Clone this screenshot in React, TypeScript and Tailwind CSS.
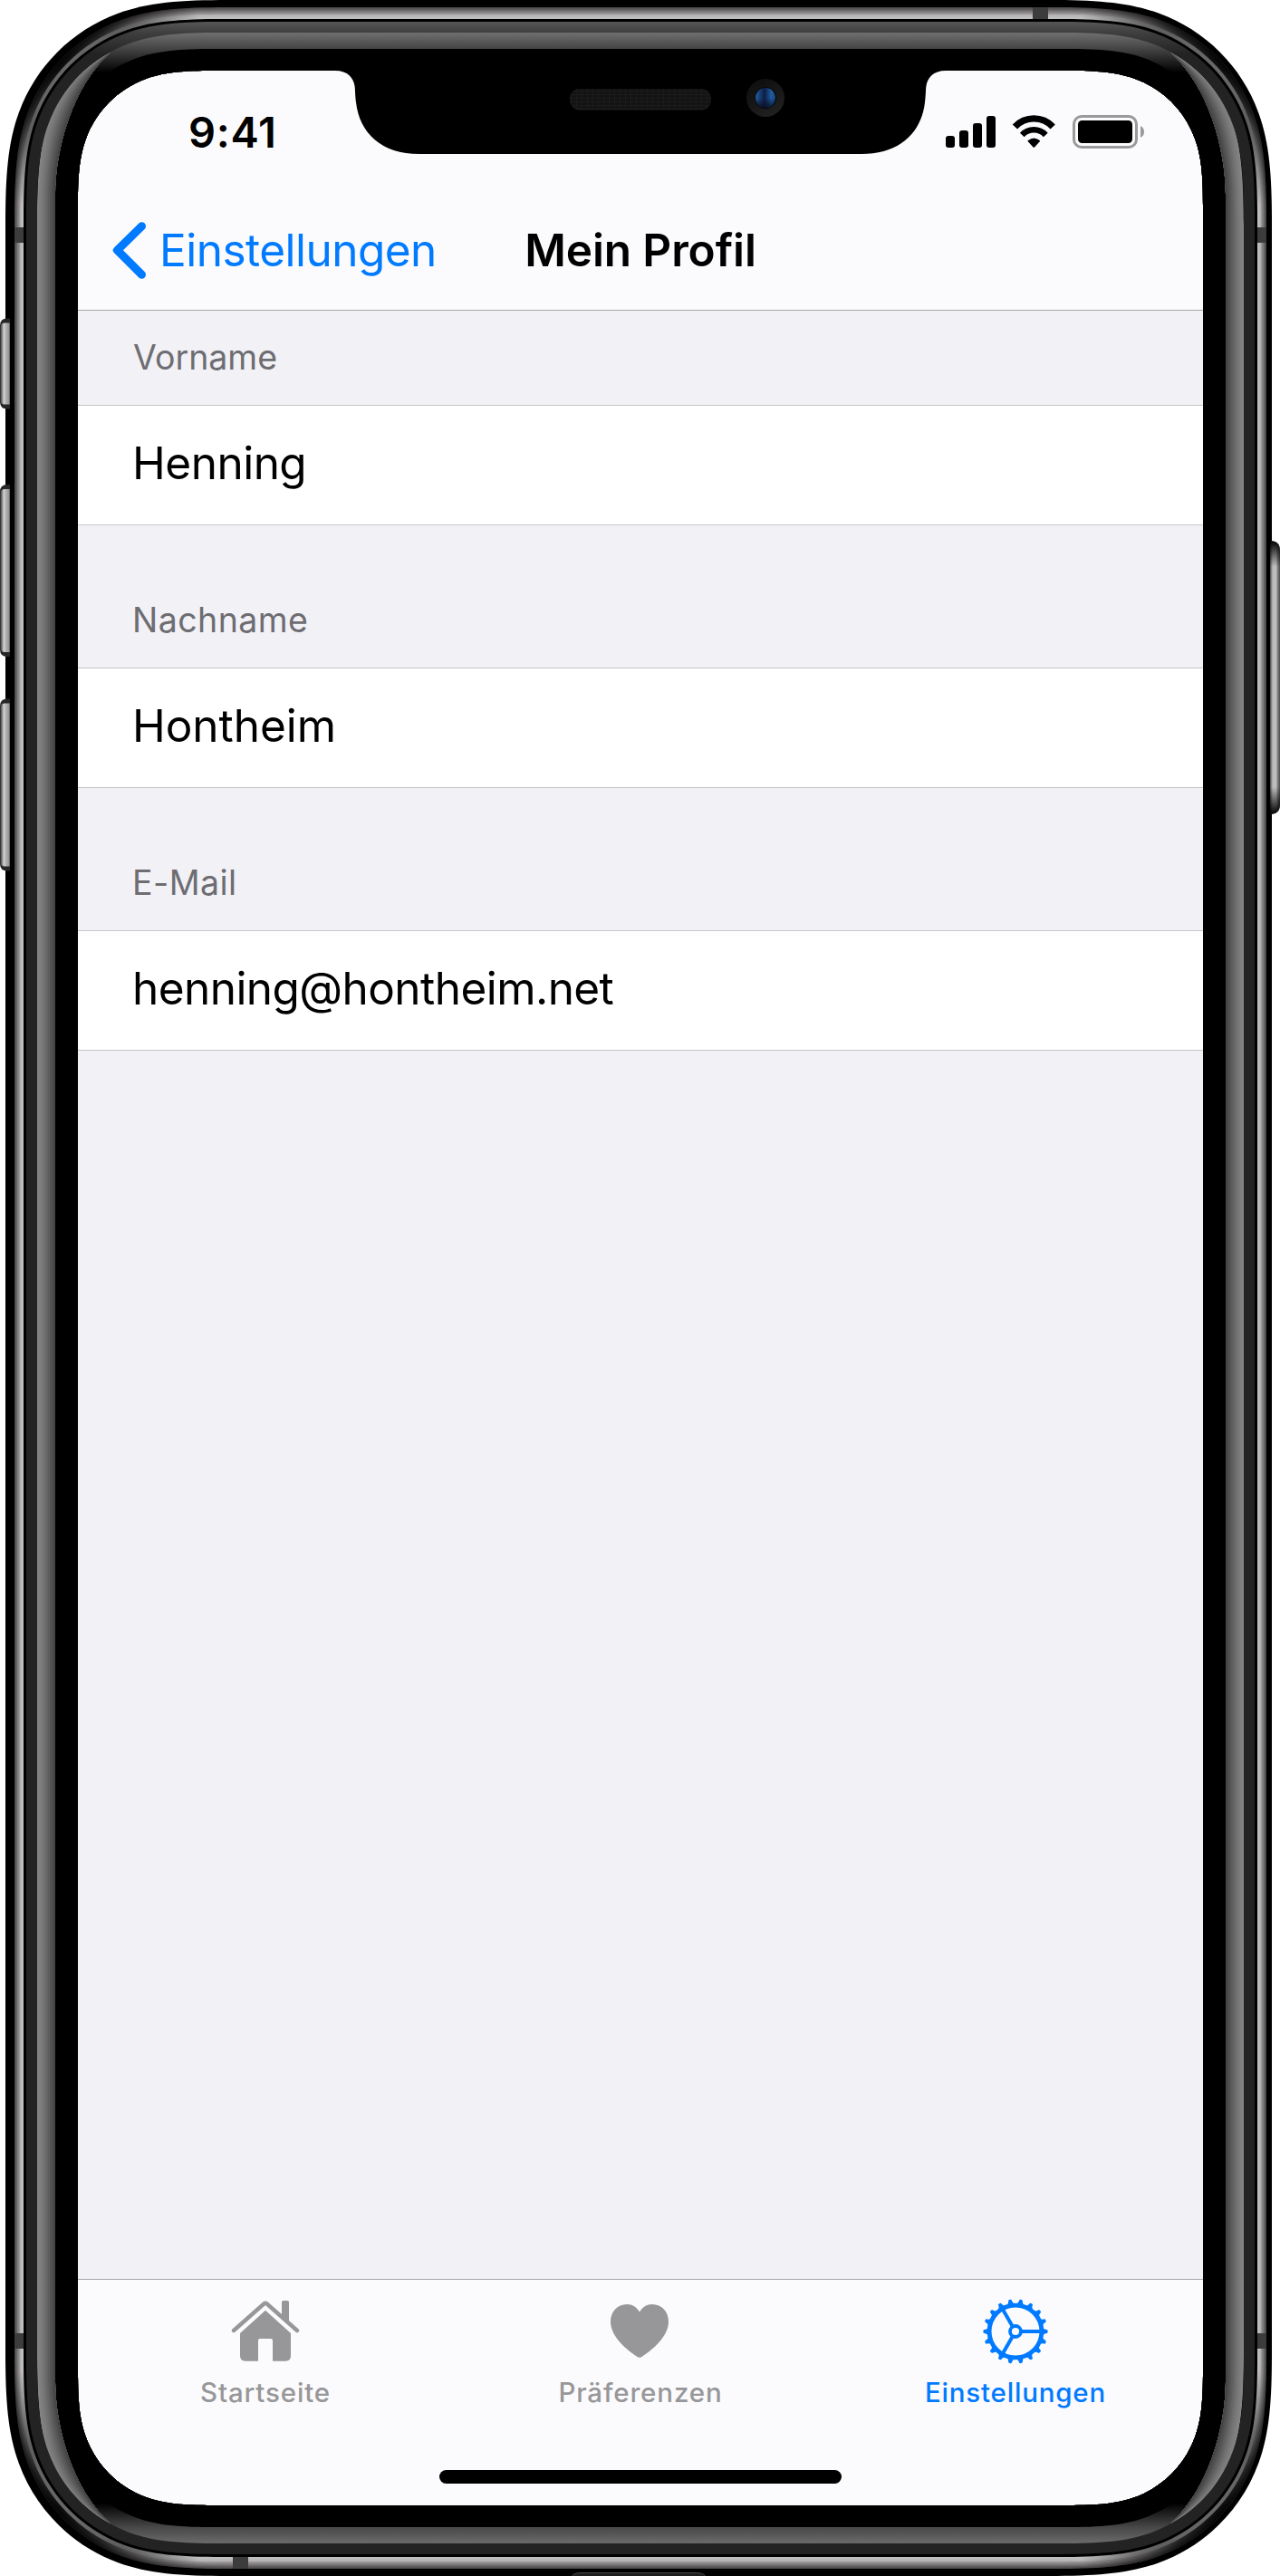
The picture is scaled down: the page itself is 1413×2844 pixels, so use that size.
import React from 'react';

const WIDTH = 1413;
const HEIGHT = 2844;

type Box = [number, number, number, number];
type Point = [number, number];

/** Closed outline of a box with continuous (superelliptic) corners. */
function squircle([x0, y0, x1, y1]: Box, r: number): string {
  const a = 1.25 * r;
  const b = 0.98 * r;
  const c = 0.8 * r;
  const h = 0.0136 * r;
  const d = 0.63149 * r;
  const e = 0.07491 * r;
  const f = 0.37282 * r;
  const g = 0.16906 * r;
  return [
    `M${x0 + a} ${y0}H${x1 - a}`,
    `C${x1 - b} ${y0} ${x1 - c} ${y0 + h} ${x1 - d} ${y0 + e}`,
    `C${x1 - f} ${y0 + g} ${x1 - g} ${y0 + f} ${x1 - e} ${y0 + d}`,
    `C${x1 - h} ${y0 + c} ${x1} ${y0 + b} ${x1} ${y0 + a}`,
    `V${y1 - a}`,
    `C${x1} ${y1 - b} ${x1 - h} ${y1 - c} ${x1 - e} ${y1 - d}`,
    `C${x1 - g} ${y1 - f} ${x1 - f} ${y1 - g} ${x1 - d} ${y1 - e}`,
    `C${x1 - c} ${y1 - h} ${x1 - b} ${y1} ${x1 - a} ${y1}`,
    `H${x0 + a}`,
    `C${x0 + b} ${y1} ${x0 + c} ${y1 - h} ${x0 + d} ${y1 - e}`,
    `C${x0 + f} ${y1 - g} ${x0 + g} ${y1 - f} ${x0 + e} ${y1 - d}`,
    `C${x0 + h} ${y1 - c} ${x0} ${y1 - b} ${x0} ${y1 - a}`,
    `V${y0 + a}`,
    `C${x0} ${y0 + b} ${x0 + h} ${y0 + c} ${x0 + e} ${y0 + d}`,
    `C${x0 + g} ${y0 + f} ${x0 + f} ${y0 + g} ${x0 + d} ${y0 + e}`,
    `C${x0 + c} ${y0 + h} ${x0 + b} ${y0} ${x0 + a} ${y0}Z`,
  ].join('');
}

const lerp = (a: number, b: number, t: number) => a + (b - a) * t;

const STEEL_OUTER: Box = [16, 8, 1398, 2836];
const STEEL_INNER: Box = [26, 21, 1388, 2823];
const STEEL_TONES = ['#4c494a', '#5a5758', '#6a6768', '#7b7879', '#8a8788', '#989596', '#b2b0b1', '#b9b7b8', '#c0bfc0', '#c0bfc0'];
const CORNERS: Point[] = [[62, 66], [1352, 66], [62, 2778], [1352, 2778]];

const GLOW_OUTER: Point[] = [[41, 250], [41, 155], [48, 96], [122, 58]];
const GLOW_INNER: Point[] = [[61, 215], [61, 165], [80, 95], [122, 58]];
const GLOW_TONES = ['#838383', '#7f7f7f', '#7a7a7a', '#747474', '#6d6d6d', '#656565', '#5d5d5d', '#555555', '#4d4d4d', '#454545'];

function glowPath(t: number): string {
  const edge = GLOW_OUTER.map((p, i): Point => [lerp(p[0], GLOW_INNER[i][0], t), lerp(p[1], GLOW_INNER[i][1], t)]);
  const [o0, o1, o2, o3] = edge;
  const [i0, i1, i2] = GLOW_INNER;
  const m = (p: Point) => `${p[0]} ${HEIGHT - p[1]}`;
  const s = (p: Point) => `${p[0]} ${p[1]}`;
  return `M${s(o0)}C${s(o1)} ${s(o2)} ${s(o3)}C${s(i2)} ${s(i1)} ${s(i0)}L${m(i0)}C${m(i1)} ${m(i2)} ${m(o3)}C${m(o2)} ${m(o1)} ${m(o0)}Z`;
}

function SideGlow() {
  return (
    <g>
      {GLOW_TONES.map((tone, i) => (
        <path key={i} d={glowPath(i / GLOW_TONES.length)} fill={tone} />
      ))}
    </g>
  );
}

function LeftButton({ y, height }: { y: number; height: number }) {
  const outline = (x: number, top: number, bottom: number, r: number) =>
    `M11 ${top}H${x + r}Q${x} ${top} ${x} ${top + r}V${bottom - r}Q${x} ${bottom} ${x + r} ${bottom}H11Z`;
  return (
    <g>
      <path d={outline(0, y, y + height, 8)} fill="#262626" />
      <path d={outline(0.5, y + 5, y + height - 5, 5)} fill="url(#keyLeft)" />
    </g>
  );
}

function DeviceFrame() {
  return (
    <svg className="pointer-events-none absolute inset-0" width={WIDTH} height={HEIGHT} viewBox={`0 0 ${WIDTH} ${HEIGHT}`} aria-hidden="true">
      <defs>
        <clipPath id="bezel">
          <path clipRule="evenodd" d={`M0 0H${WIDTH}V${HEIGHT}H0Z${squircle([86, 78, 1328, 2766], 119)}`} />
        </clipPath>
        <clipPath id="steel">
          <path d={squircle(STEEL_OUTER, 187)} />
        </clipPath>
        <clipPath id="steelEdge">
          <path d={squircle([22.5, 16.5, 1391.5, 2827.5], 180)} />
        </clipPath>
        <clipPath id="glass">
          <path d={squircle([41, 36, 1373, 2808], 161)} />
        </clipPath>
        <radialGradient id="cornerShade">
          <stop offset="0" stopColor="#000" stopOpacity="0.95" />
          <stop offset="0.35" stopColor="#000" stopOpacity="0.75" />
          <stop offset="1" stopColor="#000" stopOpacity="0" />
        </radialGradient>
        <radialGradient id="cornerShine">
          <stop offset="0" stopColor="#8a8a8a" stopOpacity="0.75" />
          <stop offset="0.5" stopColor="#8a8a8a" stopOpacity="0.6" />
          <stop offset="1" stopColor="#8a8a8a" stopOpacity="0" />
        </radialGradient>
        <linearGradient id="rim" gradientUnits="userSpaceOnUse" x1="0" y1="24" x2="0" y2="60">
          <stop offset="0" stopColor="#575757" />
          <stop offset="0.33" stopColor="#3f3f3f" />
          <stop offset="1" stopColor="#232323" />
        </linearGradient>
        <linearGradient id="glow" gradientUnits="userSpaceOnUse" x1="0" y1="36" x2="0" y2="2808">
          <stop offset="0" stopColor="#6f6f6f" />
          <stop offset="0.0065" stopColor="#444" />
          <stop offset="0.016" stopColor="#000" />
          <stop offset="0.984" stopColor="#000" />
          <stop offset="0.9935" stopColor="#474747" />
          <stop offset="1" stopColor="#6b6b6b" />
        </linearGradient>
        <linearGradient id="keyLeft">
          <stop offset="0" stopColor="#444" />
          <stop offset="0.2" stopColor="#8c8c8c" />
          <stop offset="0.35" stopColor="#d4d4d4" />
          <stop offset="0.55" stopColor="#b4b4b4" />
          <stop offset="0.85" stopColor="#9a9a9a" />
          <stop offset="1" stopColor="#555" />
        </linearGradient>
        <linearGradient id="keyRight">
          <stop offset="0" stopColor="#444" />
          <stop offset="0.15" stopColor="#8a8a8a" />
          <stop offset="0.28" stopColor="#bdbdbd" />
          <stop offset="0.62" stopColor="#bdbdbd" />
          <stop offset="0.75" stopColor="#858585" />
          <stop offset="1" stopColor="#4a4a4a" />
        </linearGradient>
        <linearGradient id="keyEnds" x1="0" y1="0" x2="0" y2="1">
          <stop offset="0" stopColor="#000" />
          <stop offset="0.015" stopColor="#000" stopOpacity="0.85" />
          <stop offset="0.095" stopColor="#000" stopOpacity="0" />
          <stop offset="0.9" stopColor="#000" stopOpacity="0" />
          <stop offset="0.985" stopColor="#000" stopOpacity="0.85" />
          <stop offset="1" stopColor="#000" />
        </linearGradient>
        <linearGradient id="lens">
          <stop offset="0" stopColor="#2660a0" />
          <stop offset="0.45" stopColor="#0d1d44" />
          <stop offset="0.8" stopColor="#1e5ea2" />
          <stop offset="1" stopColor="#18457a" />
        </linearGradient>
        <linearGradient id="lensShade" x1="0" y1="0" x2="0" y2="1">
          <stop offset="0.5" stopColor="#0a1024" stopOpacity="0" />
          <stop offset="1" stopColor="#0a1024" stopOpacity="0.95" />
        </linearGradient>
        <linearGradient id="lensRing" x1="0" y1="0" x2="0.6" y2="1">
          <stop offset="0" stopColor="#0c0c0c" />
          <stop offset="1" stopColor="#202020" />
        </linearGradient>
        <pattern id="mesh" width="6" height="4" patternUnits="userSpaceOnUse">
          <rect width="6" height="4" fill="#131313" />
          <path d="M0 0H6M0 0V4" stroke="#1d1d1d" strokeWidth="1.4" />
        </pattern>
      </defs>

      <g clipPath="url(#bezel)">
        <path d={squircle([6, 0, 1404, 2844], 197)} fill="#000" />

        {STEEL_TONES.map((tone, i) => {
          const t = i / STEEL_TONES.length;
          const box = STEEL_OUTER.map((v, k) => lerp(v, STEEL_INNER[k], t)) as Box;
          return <path key={i} d={squircle(box, lerp(187, 176, t))} fill={tone} />;
        })}
        <g clipPath="url(#steel)">
          {CORNERS.map(([cx, cy]) => (
            <circle key={`${cx}-${cy}`} cx={cx} cy={cy} r="165" fill="url(#cornerShade)" />
          ))}
          <g fill="#3c3c3c">
            <rect x="16" y="251" width="10" height="17" />
            <rect x="1388" y="251" width="10" height="17" />
            <rect x="16" y="2576" width="10" height="17" />
            <rect x="1388" y="2576" width="10" height="17" />
            <rect x="1140" y="8" width="17" height="13" />
            <rect x="257" y="2823" width="17" height="13" />
          </g>
        </g>
        <g clipPath="url(#steelEdge)">
          {CORNERS.map(([cx, cy]) => (
            <circle key={`${cx}-${cy}`} cx={cx} cy={cy} r="110" fill="url(#cornerShine)" />
          ))}
        </g>

        <path d={squircle(STEEL_INNER, 176)} fill="#000" />
        <path d={squircle([29, 24, 1385, 2820], 173)} fill="url(#rim)" />
        <path d={squircle([41, 36, 1373, 2808], 161)} fill="url(#glow)" />
        <path d={squircle([61, 54, 1353, 2790], 141)} fill="#000" />
        <g clipPath="url(#glass)">
          <SideGlow />
          <g transform="translate(1414 0) scale(-1 1)">
            <SideGlow />
          </g>
        </g>
      </g>

      <LeftButton y={351.5} height={100} />
      <LeftButton y={535} height={190} />
      <LeftButton y={771.5} height={190} />
      <path d="M1402 597Q1413 597 1413 608V888Q1413 899 1402 899Z" fill="url(#keyRight)" />
      <path d="M1402 597Q1413 597 1413 608V888Q1413 899 1402 899Z" fill="url(#keyEnds)" />
      <rect x="630.5" y="2840.5" width="149" height="12" rx="10" fill="#1f1f1f" stroke="#484848" />

      <path
        d="M370 77V78C384 78 390.5 86 391.7 96C392.1 100 392 105 393 113C397 147 421 170 463 170H951C993 170 1017 147 1021 113C1022 105 1021.9 100 1022.3 96C1023.5 86 1030 78 1044 78V77Z"
        fill="#000"
      />
      <rect x="629" y="98" width="156" height="23.5" rx="11.5" fill="#1c1c1c" />
      <rect x="629" y="98" width="156" height="21.5" rx="10.7" fill="url(#mesh)" />
      <circle cx="845" cy="108" r="21" fill="url(#lensRing)" />
      <circle cx="845" cy="108" r="12" fill="#06070c" />
      <circle cx="845" cy="108" r="11" fill="url(#lens)" />
      <circle cx="845" cy="108" r="11" fill="url(#lensShade)" />
    </svg>
  );
}

function StatusIcons() {
  return (
    <svg width="222" height="40" viewBox="1043 126 222 40" aria-hidden="true">
      <rect x="1044" y="150" width="10" height="13" rx="3" />
      <rect x="1059" y="144" width="10" height="19" rx="3" />
      <rect x="1074" y="136" width="10" height="27" rx="3" />
      <rect x="1089" y="128" width="10" height="35" rx="3" />
      <g transform="translate(1117 126)">
        <path d="M3.4 14A28.6 28.6 0 0 1 45.2 14" fill="none" stroke="#000" strokeWidth="7.3" />
        <path d="M11.3 22.9A17.8 17.8 0 0 1 37.3 22.9" fill="none" stroke="#000" strokeWidth="6.6" />
        <path d="M23.5 36.4L17.6 30Q17.3 29.4 17.9 28.9Q24.3 23.9 30.7 28.9Q31.3 29.4 31 30L25.1 36.4Q24.3 37 23.5 36.4Z" />
      </g>
      <rect x="1185.5" y="128.5" width="69" height="34" rx="8.5" fill="none" stroke="#9a9a9b" strokeWidth="3" />
      <rect x="1190" y="133" width="60" height="25" rx="4.5" />
      <path d="M1259 139Q1263 141 1263 145.500Q1263 150 1259 152Z" fill="#9a9a9b" />
    </svg>
  );
}

function HomeIcon() {
  return (
    <svg width="80" height="72" viewBox="1 2 80 72" fill="#979799" aria-hidden="true">
      <path d="M6 37L39.600 7.300Q41 6.200 42.400 7.300L76 37" fill="none" stroke="#979799" strokeWidth="4.400" strokeLinecap="round" />
      <path d="M59 20V5.500Q59 4 60.500 4H65.500Q67 4 67 5.500V27Z" />
      <path d="M41 14.700L69 40V65Q69 70.700 63.300 70.700H49V48Q49 46 47 46H35Q33 46 33 48V70.700H18.700Q13 70.700 13 65V40Z" />
    </svg>
  );
}

function HeartIcon() {
  return (
    <svg width="80" height="72" viewBox="-7 -6 80 72" fill="#979799" aria-hidden="true">
      <path d="M32 8.500C29 3.300 24 0 18 0C7.500 0 0 8.500 0 19C0 36 18 50.500 30 58.200Q32 59.400 34 58.200C46 50.500 64 36 64 19C64 8.500 56.500 0 46 0C40 0 35 3.300 32 8.500Z" />
    </svg>
  );
}

function GearIcon() {
  const teeth = Array.from({ length: 18 }, (_, i) => i * 20);
  return (
    <svg width="80" height="72" viewBox="-40 -36 80 72" fill="none" stroke="#007aff" aria-hidden="true">
      <circle r="28.900" strokeWidth="4.800" />
      <circle r="6" strokeWidth="3.800" />
      {[0, 120, 240].map((angle) => (
        <path key={angle} d="M7 0H28" strokeWidth="4" transform={`rotate(${angle})`} />
      ))}
      <g fill="#007aff" stroke="none">
        {teeth.map((angle) => (
          <path key={angle} d="M30 -4.200Q31.500 -2.200 35.200 -1.700Q36.200 0 35.200 1.700Q31.500 2.200 30 4.200Z" transform={`rotate(${angle})`} />
        ))}
      </g>
    </svg>
  );
}

function Tab({ icon, label, active = false }: { icon: React.ReactNode; label: string; active?: boolean }) {
  return (
    <button className="flex flex-1 flex-col items-center gap-[13px] pt-[21px]">
      {icon}
      <span
        className={
          active
            ? 'text-[29.5px] leading-9 font-medium tracking-[0.8px] text-[#007aff]'
            : 'text-[29.5px] leading-9 font-medium tracking-[0.85px] text-[#979799]'
        }
      >
        {label}
      </span>
    </button>
  );
}

function Field({ label, value, tracking, first = false }: { label: string; value: string; tracking: string; first?: boolean }) {
  return (
    <section>
      <div className={first ? 'h-[104px] pt-8 pl-[61px]' : 'h-[157px] pt-[85px] pl-[60px]'}>
        <h2 className={first ? 'text-[37.5px] leading-10 text-[#6d6d72]' : 'text-[37.5px] leading-10 tracking-[0.45px] text-[#6d6d72]'}>{label}</h2>
      </div>
      <div className="flex h-[133px] items-center border-y border-[#c6c6c8] bg-white pb-[3px] pl-[60px]">
        <span className={`text-[49.5px] leading-none text-black ${tracking}`}>{value}</span>
      </div>
    </section>
  );
}

export default function App() {
  return (
    <div className="relative h-[2844px] w-[1413px] overflow-hidden bg-white pt-[78px] pl-[86px] font-[Inter,sans-serif]">
      <main className="flex h-[2688px] w-[1242px] flex-col overflow-hidden rounded-[105px] bg-[#f2f1f6]">
        <header className="h-[265px] shrink-0 border-b border-[#a8a8ab] bg-[#fbfbfd]">
          <div className="flex h-[132px] items-start justify-between pt-[48px] pr-[63px] pl-[122px]">
            <span className="text-[47px] leading-10 font-semibold tracking-[0.7px] text-black">9:41</span>
            <StatusIcons />
          </div>
          <nav className="grid h-[132px] grid-cols-[1fr_auto_1fr] items-center">
            <a className="flex items-center gap-3 pl-[38px] text-[#007aff]">
              <svg width="40" height="68" viewBox="124 242 40 68" aria-hidden="true">
                <path d="M156.500 249.700L129.500 276.300L156.500 303.300" fill="none" stroke="#007aff" strokeWidth="9" strokeLinecap="round" strokeLinejoin="round" />
                <path d="M125 275.300L131 269.700L134 276.300L131 283L125 277.700Q124.200 276.500 125 275.300Z" fill="#007aff" />
              </svg>
              <span className="pt-0.5 text-[49.5px] leading-none tracking-[-0.53px]">Einstellungen</span>
            </a>
            <h1 className="pt-0.5 text-[49.5px] leading-none font-semibold tracking-[-0.1px] text-black">Mein Profil</h1>
          </nav>
        </header>

        <div className="flex-1">
          <Field label="Vorname" value="Henning" tracking="tracking-[-0.5px]" first />
          <Field label="Nachname" value="Hontheim" tracking="tracking-[-0.05px]" />
          <Field label="E-Mail" value="henning@hontheim.net" tracking="tracking-[-0.56px]" />
        </div>

        <footer className="flex h-[250px] shrink-0 flex-col items-center justify-between border-t border-[#a8a8ab] bg-[#fbfbfd] pb-6">
          <div className="flex w-full">
            <Tab icon={<HomeIcon />} label="Startseite" />
            <Tab icon={<HeartIcon />} label="Präferenzen" />
            <Tab icon={<GearIcon />} label="Einstellungen" active />
          </div>
          <div className="h-[15px] w-[444px] rounded-full bg-black" />
        </footer>
      </main>
      <DeviceFrame />
    </div>
  );
}
